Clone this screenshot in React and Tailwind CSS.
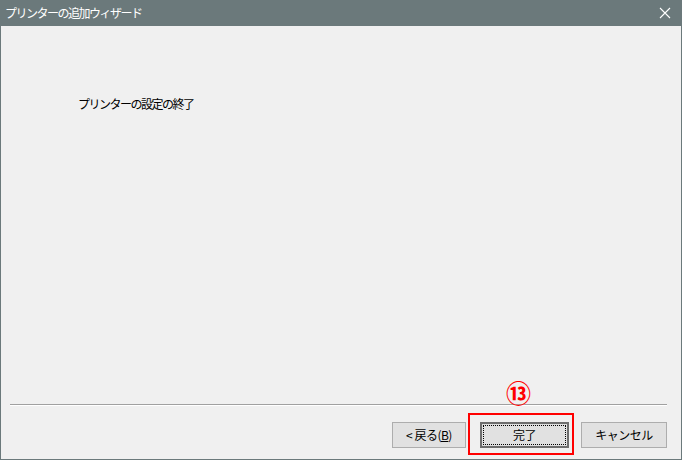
const font = { fontFamily: '"Noto Sans CJK JP", "Noto Sans", sans-serif' };

const Button = ({ children, width, primary = false }) => (
    <button
        className={
            primary
                ? `${width} h-[26px] bg-[#e1e1e1] border-2 border-[#6e6e6e] p-[1px] flex`
                : `${width} h-[26px] bg-[#e1e1e1] border border-[#adadad] flex items-center justify-center text-[12px] tracking-[-0.5px] text-black whitespace-nowrap`
        }
    >
        {primary ? (
            <span className="flex-1 border border-dotted border-black flex items-center justify-center text-[12px] tracking-[-0.5px] text-black">
                {children}
            </span>
        ) : (
            children
        )}
    </button>
);

export default function App() {
    return (
        <div className="w-[682px] h-[460px] bg-[#6b797b] p-[1px] pt-0 flex flex-col" style={font}>
            <div className="h-[26px] flex items-center justify-between pl-[4px] pr-[10px]">
                <span className="text-white text-[12px] tracking-[-1.5px] leading-none">プリンターの追加ウィザード</span>
                <svg width="12" height="12" viewBox="0 0 12 12">
                    <path d="M1 1L11 11M11 1L1 11" stroke="#fff" strokeWidth="1.1" />
                </svg>
            </div>
            <div className="flex-1 bg-[#f0f0f0] flex flex-col">
                <div className="flex-1 pl-[77px] pt-[72px]">
                    <p className="text-[12px] tracking-[-1.5px] text-black leading-none">プリンターの設定の終了</p>
                </div>
                <div className="ml-[9px] mr-[14px] border-t border-[#a0a0a0] border-b border-b-white" />
                <div className="h-[53px] flex items-start justify-end pr-[14px] pt-[16px] relative">
                    <Button width="w-[74px]">
                        <span>
                            &lt;&nbsp;戻る(<span className="underline">B</span>)
                        </span>
                    </Button>
                    <div className="relative ml-[14px]">
                        <div className="absolute -left-[12px] -top-[9px] w-[106px] h-[42px] border-2 border-[#ff0000]" />
                        <div className="absolute left-[26px] -top-[42px] text-[#ff0000] text-[25px] leading-none font-bold">⑬</div>
                        <Button width="w-[89px]" primary>完了</Button>
                    </div>
                    <div className="ml-[12px]">
                        <Button width="w-[86px]">キャンセル</Button>
                    </div>
                </div>
            </div>
        </div>
    );
}
